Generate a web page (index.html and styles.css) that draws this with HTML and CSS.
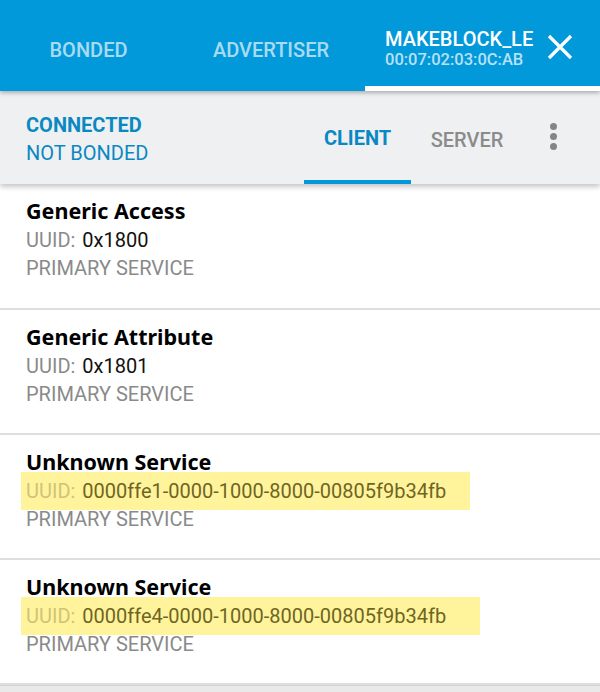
FILE: index.html
```html
<!DOCTYPE html>
<html>
<head>
<meta charset="utf-8">
<link rel="stylesheet" href="styles.css">
</head>
<body>
<div class="app">
  <header class="topbar">
    <div class="tab tab-bonded">BONDED</div>
    <div class="tab tab-adv">ADVERTISER</div>
    <div class="tab tab-device">
      <div class="device-text">
        <div class="device-name">MAKEBLOCK_LE</div>
        <div class="device-mac">00:07:02:03:0C:AB</div>
      </div>
      <svg class="close" width="26" height="26" viewBox="0 0 26 26"><path d="M2 2 L24 24 M24 2 L2 24" stroke="#fff" stroke-width="3.2" fill="none"/></svg>
    </div>
  </header>
  <div class="subbar">
    <div class="status">
      <div class="status-conn">CONNECTED</div>
      <div class="status-bond">NOT BONDED</div>
    </div>
    <div class="subtab subtab-client">CLIENT</div>
    <div class="subtab subtab-server">SERVER</div>
    <div class="menu">
      <span class="dot"></span><span class="dot"></span><span class="dot"></span>
    </div>
  </div>
  <div class="list">
    <div class="item">
      <div class="item-title">Generic Access</div>
      <div class="item-uuid"><span class="uuid-label">UUID:</span><span class="uuid-value">0x1800</span></div>
      <div class="item-type">PRIMARY SERVICE</div>
    </div>
    <div class="item">
      <div class="item-title">Generic Attribute</div>
      <div class="item-uuid"><span class="uuid-label">UUID:</span><span class="uuid-value">0x1801</span></div>
      <div class="item-type">PRIMARY SERVICE</div>
    </div>
    <div class="item">
      <div class="item-title">Unknown Service</div>
      <div class="item-uuid"><span class="hl hl-1"><span class="uuid-label">UUID:</span><span class="uuid-value">0000ffe1-0000-1000-8000-00805f9b34fb</span></span></div>
      <div class="item-type">PRIMARY SERVICE</div>
    </div>
    <div class="item">
      <div class="item-title">Unknown Service</div>
      <div class="item-uuid"><span class="hl hl-2"><span class="uuid-label">UUID:</span><span class="uuid-value">0000ffe4-0000-1000-8000-00805f9b34fb</span></span></div>
      <div class="item-type">PRIMARY SERVICE</div>
    </div>
  </div>
  <div class="footer"></div>
</div>
</body>
</html>
```
FILE: styles.css
```css
* { box-sizing: border-box; }
html, body { margin: 0; padding: 0; }
body {
  width: 600px;
  height: 692px;
  overflow: hidden;
  background: #ffffff;
  font-family: Roboto, "Liberation Sans", sans-serif;
}
.app { display: flex; flex-direction: column; height: 692px; }

.topbar {
  position: relative;
  z-index: 3;
  height: 91px;
  flex: none;
  background: #0299db;
  display: grid;
  grid-template-columns: 177px 188px 1fr;
  box-shadow: 0 2px 4px rgba(0,0,0,0.28);
}
.tab {
  display: flex;
  align-items: center;
  justify-content: center;
  font-size: 20px;
  font-weight: 500;
  color: rgba(255,255,255,0.68);
  padding-top: 9px;
}
.tab-device {
  justify-content: flex-start;
  padding-left: 20px;
  border-bottom: 5px solid #ffffff;
  padding-top: 11px;
}
.device-text { display: flex; flex-direction: column; }
.device-name {
  color: #ffffff;
  font-size: 20px;
  font-weight: 500;
  line-height: 21px;
}
.device-mac {
  color: rgba(255,255,255,0.72);
  font-size: 16.5px;
  line-height: 19px;
}
.close { margin-left: auto; margin-right: 27px; margin-top: -4px; }

.subbar {
  position: relative;
  z-index: 2;
  height: 93px;
  flex: none;
  background: #eff0f2;
  display: flex;
  align-items: stretch;
  box-shadow: 0 3px 5px rgba(0,0,0,0.22);
}
.status {
  width: 304px;
  padding-left: 26px;
  display: flex;
  flex-direction: column;
  justify-content: center;
  padding-top: 2px;
  color: #0a88c2;
  font-size: 20px;
}
.status-conn { font-weight: 700; line-height: 28px; }
.status-bond { line-height: 28px; }
.subtab {
  display: flex;
  align-items: center;
  justify-content: center;
  font-size: 20px;
  font-weight: 700;
  padding-top: 4px;
}
.subtab-client {
  width: 107px;
  color: #0a88c2;
  border-bottom: 4px solid #0299db;
}
.subtab-server {
  width: 112px;
  color: #8b8b8b;
  font-weight: 500;
}
.menu {
  width: 60px;
  display: flex;
  flex-direction: column;
  align-items: center;
  justify-content: center;
  gap: 3px;
  padding-bottom: 2px;
}
.dot {
  width: 7px;
  height: 7px;
  border-radius: 50%;
  background: #858585;
}

.list { flex: none; }
.item {
  height: 125px;
  padding: 13px 0 0 26px;
  border-bottom: 2px solid #dedede;
}
.item:first-child { height: 126px; }
.item-title {
  font-family: "Noto Sans", "Open Sans", sans-serif;
  font-weight: 700;
  font-size: 21.5px;
  line-height: 28px;
  color: #000;
}
.item-uuid {
  font-size: 20px;
  line-height: 30px;
}
.uuid-label { color: #8a8a8a; margin-right: 7px; }
.uuid-value { color: #111; }
.hl {
  display: inline-block;
  background: #fff49c;
  margin: -4px 0 -4px -5px;
  padding: 4px 0 4px 5px;
  line-height: 30px;
}
.hl .uuid-label { color: #cfc37a; }
.hl .uuid-value { color: #6f6523; }
.hl-1 { width: 449px; }
.hl-2 { width: 459px; }
.item-type {
  font-size: 20px;
  line-height: 27px;
  color: #8a8a8a;
}
.footer {
  flex: 1;
  background: #e9e9e9;
  border-top: 1px solid #d3d3d3;
}
```
